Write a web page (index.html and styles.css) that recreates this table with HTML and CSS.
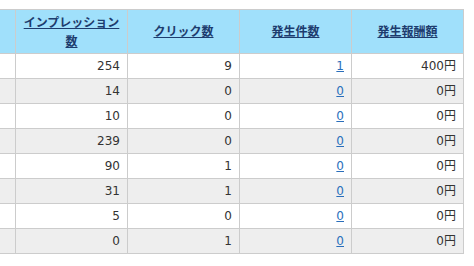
FILE: index.html
```html
<!DOCTYPE html>
<html lang="ja">
<head>
<meta charset="utf-8">
<link rel="stylesheet" href="styles.css">
</head>
<body>
<table class="report">
  <thead>
    <tr>
      <th class="c0"></th>
      <th><a href="#">インプレッション数</a></th>
      <th><a href="#">クリック数</a></th>
      <th><a href="#">発生件数</a></th>
      <th><a href="#">発生報酬額</a></th>
    </tr>
  </thead>
  <tbody>
    <tr><td class="c0"></td><td>254</td><td>9</td><td><a href="#">1</a></td><td>400円</td></tr>
    <tr><td class="c0"></td><td>14</td><td>0</td><td><a href="#">0</a></td><td>0円</td></tr>
    <tr><td class="c0"></td><td>10</td><td>0</td><td><a href="#">0</a></td><td>0円</td></tr>
    <tr><td class="c0"></td><td>239</td><td>0</td><td><a href="#">0</a></td><td>0円</td></tr>
    <tr><td class="c0"></td><td>90</td><td>1</td><td><a href="#">0</a></td><td>0円</td></tr>
    <tr><td class="c0"></td><td>31</td><td>1</td><td><a href="#">0</a></td><td>0円</td></tr>
    <tr><td class="c0"></td><td>5</td><td>0</td><td><a href="#">0</a></td><td>0円</td></tr>
    <tr><td class="c0"></td><td>0</td><td>1</td><td><a href="#">0</a></td><td>0円</td></tr>
  </tbody>
</table>
</body>
</html>
```
FILE: styles.css
```css
html, body {
  margin: 0;
  padding: 0;
  background: #fff;
}
body {
  padding-top: 9px;
  overflow: hidden;
  font-family: "DejaVu Sans", "Noto Sans CJK JP", sans-serif;
  font-size: 12px;
  color: #333;
}
.report {
  border-collapse: collapse;
  table-layout: fixed;
  margin-left: -46px;
}
.report th, .report td {
  border: 1px solid #ccc;
  width: 112px;
  padding: 0 6px;
  box-sizing: border-box;
}
.report .c0 {
  width: 61px;
}
.report th {
  background: #a0e0fb;
  height: 44px;
  text-align: center;
  font-weight: bold;
  line-height: 17px;
  padding: 0 2px;
}
.report th a {
  color: #1d3c6e;
  text-decoration: underline;
  font-family: "Noto Sans CJK JP", sans-serif;
}
.report td {
  height: 25px;
  line-height: 14px;
  text-align: right;
  padding-right: 7px;
}
.report tbody tr:nth-child(even) td {
  background: #eee;
}
.report td a {
  color: #2a6ebb;
  text-decoration: underline;
}
```
